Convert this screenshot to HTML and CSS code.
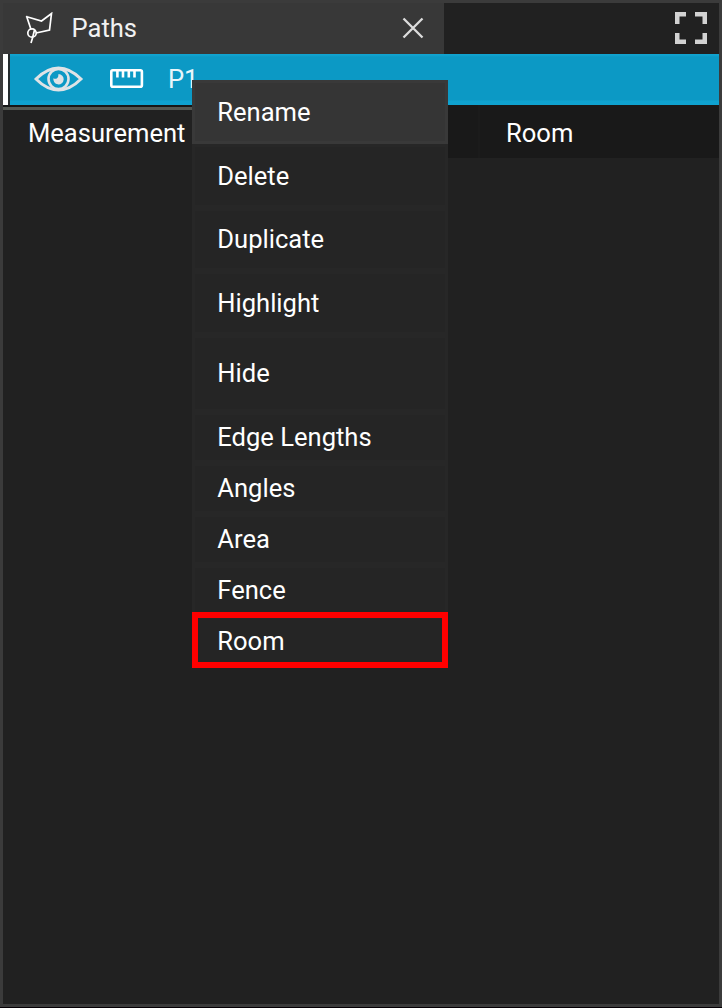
FILE: index.html
```html
<!DOCTYPE html>
<html lang="en">
<head>
<meta charset="utf-8">
<title>Paths</title>
<link rel="stylesheet" href="styles.css">
</head>
<body>
<main class="panel">
  <header class="tabs">
    <div class="tab">
      <svg class="tab-icon" width="30" height="32" viewBox="0 0 30 32"><g fill="none" stroke="#fff" stroke-width="1.7"><path d="M2 4.5 17.5 9 27.5 1.5 25.5 18 12 21M2.5 4 7 17.5M7 31 8.5 26 10.5 18"/><circle cx="8" cy="21" r="4.2"/></g></svg>
      <span class="tab-title">Paths</span>
      <svg class="close" width="22" height="22" viewBox="0 0 22 22"><path d="M1.5 1.5 20.5 20.5M20.5 1.5 1.5 20.5" stroke="#ddd" stroke-width="2.3"/></svg>
    </div>
    <svg class="expand" width="32" height="32" viewBox="0 0 32 32"><path d="M2.2 12V2.2H11M20 2.2H29.8V12M29.8 21V29.8H20M11 29.8H2.2V21" fill="none" stroke="#d2d2d2" stroke-width="4.6"/></svg>
  </header>
  <div class="path-row">
    <svg class="eye" width="50" height="26" viewBox="0 0 50 26"><g fill="none" stroke="#dfe3e6"><path d="M2 13Q13 2 24.5 2T47 13Q36 24 24.5 24T2 13Z" stroke-width="3"/><circle cx="24.5" cy="13" r="10" stroke-width="2.6"/></g><path d="M24.5 8A5.2 5.2 0 1 1 19.4 12.2Q21.5 13.2 23 12.2T24.5 8Z" fill="#dfe3e6"/></svg>
    <svg class="ruler" width="34" height="20" viewBox="0 0 34 20"><rect x="1.3" y="1.3" width="30.6" height="16.4" rx="1.5" fill="none" stroke="#fff" stroke-width="2.6"/><path d="M7.4 2V8.6M13 2V8.6M18.8 2V8.6M24.5 2V8.6" stroke="#fff" stroke-width="2.6"/></svg>
    <span>P1</span>
  </div>
  <div class="columns">
    <div class="column-name">Measurement</div>
    <div class="column-gap"></div>
    <div class="column-room">Room</div>
  </div>
</main>
<nav class="menu">
  <div class="item active">Rename</div>
  <div class="item">Delete</div>
  <div class="item">Duplicate</div>
  <div class="item">Highlight</div>
  <div class="item tall">Hide</div>
  <div class="item short">Edge Lengths</div>
  <div class="item short">Angles</div>
  <div class="item short">Area</div>
  <div class="item short">Fence</div>
  <div class="item short">Room</div>
  <div class="marker"></div>
</nav>
</body>
</html>
```
FILE: styles.css
```css
* { box-sizing: border-box; }
body {
  margin: 0;
  height: 1008px;
  overflow: hidden;
  background: #050005;
  color: #fff;
  font: 25.55px/30px Roboto, sans-serif;
}
.panel {
  height: 1007px;
  border: 3px solid #3b3b3b;
  background: #212121;
}
.tabs {
  display: flex;
  height: 51px;
  align-items: center;
  justify-content: space-between;
  padding-right: 12px;
}
.tab {
  display: flex;
  align-items: center;
  width: 441px;
  height: 51px;
  padding: 0 20px 2px 20.5px;
  background: #383838;
}
.tab-title { margin-left: 18px; color: #f1f1f1; }
.close { margin-left: auto; }
.expand { margin-bottom: 1px; }
.path-row {
  display: flex;
  align-items: center;
  height: 51px;
  padding: 0 0 2px 26px;
  border-left: 5px solid #fff;
  background: linear-gradient(#11a3d0 0 1px, #0c99c5 3px 46px, #0fa2d0 47px);
  box-shadow: inset 2px 0 #252b2d;
  color: #e9f6fb;
}
.ruler { margin: 1px 24px 0 26px; }
.columns {
  display: grid;
  grid-template-columns: 445px 32px 1fr;
  height: 53px;
  line-height: 56px;
}
.column-name {
  padding-left: 25px;
  background: linear-gradient(#171717 0 2px, #555852 2px 5px, #212121 5px);
}
.column-gap, .column-room { height: 53px; }
.column-gap { background: #191919; border-right: 2px solid #1b1b1b; }
.column-room { padding-left: 26px; background: #191919; }
.menu {
  position: absolute;
  left: 192px;
  top: 80px;
  width: 256px;
  background: #252525;
}
.item {
  display: flex;
  align-items: center;
  height: 63.75px;
  padding-left: 22.3px;
  border: 3px solid #272727;
}
.active { background: #353535; border-color: #393939; }
.tall { height: 76.8px; }
.short { height: 51px; }
.marker {
  position: absolute;
  left: 0;
  top: 532px;
  width: 256px;
  height: 56px;
  border: 6px solid #f00;
}
```
